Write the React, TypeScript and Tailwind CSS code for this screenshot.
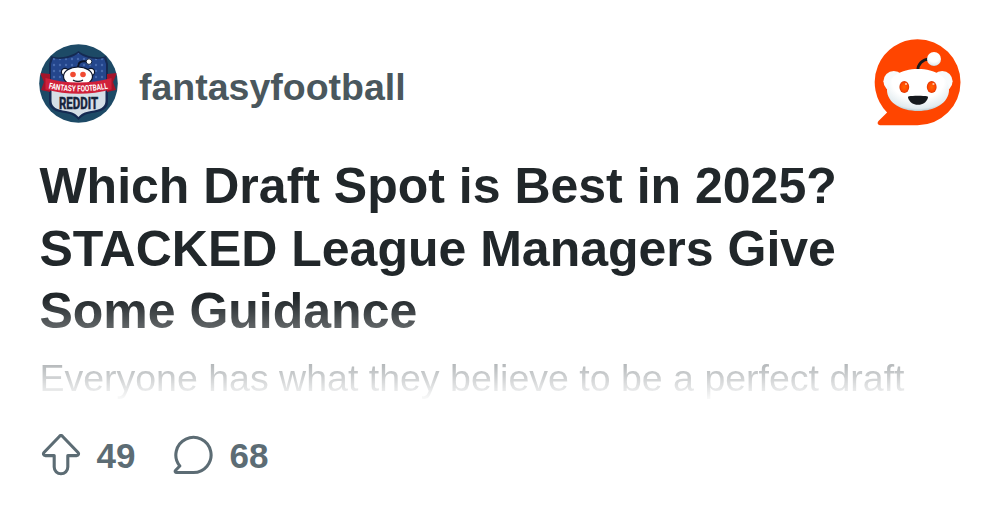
function SubredditAvatar() {
  return (
    <svg className="mt-[2px] h-[79px] w-[79px] shrink-0 overflow-visible" viewBox="0 0 79 79" aria-hidden="true">
      <defs>
        <clipPath id="avatar-clip">
          <circle cx="39.5" cy="39.5" r="39.3" />
        </clipPath>
        <pattern id="dots" width="6" height="6" patternUnits="userSpaceOnUse">
          <circle cx="3" cy="3" r="1.2" fill="#5f84c4" />
        </pattern>
      </defs>
      <g clipPath="url(#avatar-clip)">
        <rect width="79" height="79" fill="#1d4a66" />
        <path
          d="M12 12C18 15 32 13 39.5 7C47 13 61 15 67 12L69 20V58C69 65 62 68 53 69C46 70 42 73 39.5 76C37 73 33 70 26 69C17 68 10 65 10 58V20Z"
          fill="#152a52"
        />
        <path d="M14 14C21 16 32 15 39.5 9C47 15 58 16 65 14L67 20V46H12V20Z" fill="#24468c" />
        <path d="M14 14C21 16 32 15 39.5 9C47 15 58 16 65 14L67 20V46H12V20Z" fill="url(#dots)" opacity=".6" />
        <path d="M12.5 44H66.5V57C66.5 63 61 66 52 67C45.5 68 42 70 39.5 73C37 70 33.5 68 27 67C18 66 12.5 63 12.5 57Z" fill="#d5dee6" />
        <path d="M39 24C39 18 42 16.5 48 17.5" fill="none" stroke="#0c152b" strokeWidth="2" />
        <circle cx="50" cy="17.6" r="2.8" fill="#fff" stroke="#14233c" strokeWidth="1" />
        <circle cx="26" cy="28" r="3.6" fill="#fff" stroke="#0c152b" strokeWidth="1.2" />
        <circle cx="52" cy="28" r="3.6" fill="#fff" stroke="#0c152b" strokeWidth="1.2" />
        <ellipse cx="39" cy="32.5" rx="14.5" ry="9.5" fill="#fff" stroke="#0c152b" strokeWidth="1.2" />
        <circle cx="34" cy="30.5" r="2.8" fill="#f04a32" />
        <circle cx="44" cy="30.5" r="2.8" fill="#f04a32" />
        <path d="M34 36.2Q39 38.8 44 36.2" fill="none" stroke="#1b2434" strokeWidth="1.3" />
        <path d="M1 29L11 30V48L2 46L5 38ZM78 29L68 30V48L77 46L74 38Z" fill="#a3142a" />
        <path d="M6.5 34Q39.5 43 72.5 34V45.5Q39.5 54 6.5 45.5Z" fill="#d0203a" />
      </g>
      <path id="ribbon" d="M9.5 44.5Q39.5 50.5 69.5 44.5" fill="none" />
      <text className="fill-white font-['Roboto',sans-serif] text-[8.4px] font-bold">
        <textPath href="#ribbon" startOffset="0" textLength="60" lengthAdjust="spacingAndGlyphs">
          FANTASY FOOTBALL
        </textPath>
      </text>
      <text
        x="20"
        y="64.8"
        textLength="39"
        lengthAdjust="spacingAndGlyphs"
        className="fill-[#17243c] stroke-[#17243c] stroke-[0.5px] font-['Roboto',sans-serif] text-[16px] font-bold"
      >
        REDDIT
      </text>
    </svg>
  )
}

function RedditLogo() {
  return (
    <svg className="h-[87px] w-[87px] shrink-0" viewBox="0 0 87 87" aria-hidden="true">
      <defs>
        <radialGradient id="face" cx=".5" cy=".3" r=".75">
          <stop offset=".55" stopColor="#fff" />
          <stop offset=".85" stopColor="#e1ebef" />
          <stop offset="1" stopColor="#98b0b8" />
        </radialGradient>
        <radialGradient id="eye" cx=".5" cy=".5" r=".6">
          <stop offset="0" stopColor="#ff6600" />
          <stop offset=".6" stopColor="#ff4500" />
          <stop offset="1" stopColor="#b92b00" />
        </radialGradient>
      </defs>
      <path
        d="M43.5 .2A43 43 0 1 1 43.5 86.2H6.2C3.8 86.2 2.8 83.7 4.5 82L13.1 73.4A43 43 0 0 1 43.5 .2Z"
        fill="#ff4500"
      />
      <circle cx="19.8" cy="42.3" r="10.4" fill="#f8fbfc" />
      <circle cx="68.2" cy="42.3" r="10.4" fill="#f8fbfc" />
      <path d="M43.8 31.5C43.8 25 48.5 20.5 55 20.2" fill="none" stroke="#191a1c" strokeWidth="2.8" />
      <circle cx="60" cy="20" r="7" fill="url(#face)" />
      <path
        d="M44 30C61 30 75 38 75 51C75 63.5 61 72 44 72S13 63.5 13 51C13 38 27 30 44 30Z"
        fill="url(#face)"
      />
      <ellipse cx="30.3" cy="48" rx="4.9" ry="6" fill="url(#eye)" />
      <ellipse cx="57.7" cy="48" rx="4.9" ry="6" fill="url(#eye)" />
      <circle cx="32" cy="45" r="1.1" fill="#ffc7a5" />
      <circle cx="59.4" cy="45" r="1.1" fill="#ffc7a5" />
      <path
        d="M44 56.8C48 56.8 51 57 52.9 57.3C53.8 57.5 54.2 58 53.9 58.9C52.5 62.9 49 65.7 44 65.7S35.5 62.9 34.1 58.9C33.8 58 34.2 57.5 35.1 57.3C37 57 40 56.8 44 56.8Z"
        fill="#15191d"
      />
    </svg>
  )
}

function UpvoteIcon() {
  return (
    <svg className="h-[42px] w-[40px]" viewBox="0 0 40 42" fill="none" stroke="currentColor" strokeWidth="3.1" strokeLinejoin="round">
      <path d="M18.6 2.2Q20 .9 21.4 2.2L36.8 18.2C38.2 19.8 37.5 21.6 35.5 21.6H26.8V33A6.8 6.8 0 0 1 13.2 33V21.6H4.5C2.5 21.6 1.8 19.8 3.2 18.2Z" />
    </svg>
  )
}

function CommentIcon() {
  return (
    <svg className="h-[42px] w-[40px]" viewBox="0 0 40 42" fill="none" stroke="currentColor" strokeWidth="3.1" strokeLinejoin="round">
      <path d="M20 38.5H3.8C2.2 38.5 1.7 37.4 2.7 36.3L6.8 32A17.6 17.6 0 1 1 20 38.5Z" />
    </svg>
  )
}

export default function App() {
  return (
    <main className="flex h-[521px] w-[1000px] flex-col overflow-hidden bg-white pl-[39px] pr-[39px] pt-[39px] font-['Liberation_Sans',Arial,sans-serif]">
      <header className="flex h-[87px] items-center justify-between">
        <div className="flex items-center gap-[21px]">
          <SubredditAvatar />
          <span className="pt-[8px] text-[37.5px] leading-[46px] font-bold text-[#4a575d]">fantasyfootball</span>
        </div>
        <RedditLogo />
      </header>

      <section className="mt-[29px] h-[248px] overflow-hidden pl-[0.4px] mask-[linear-gradient(to_bottom,black_0,black_143px,transparent_247px)]">
        <h1 className="text-[50px] leading-[62.5px] font-bold text-[#21272a]">
          Which Draft Spot is Best in 2025?
          <br />
          STACKED League Managers Give
          <br />
          Some Guidance
        </h1>
        <p className="mt-3 text-[37.5px] leading-[47px] whitespace-nowrap text-[#333d42]">
          Everyone has what they believe to be a perfect draft
        </p>
      </section>

      <footer className="mt-[29.5px] flex items-center text-[35px] leading-[42px] font-bold text-[#5c6c74]">
        <div className="ml-[1.5px] flex items-center gap-4">
          <UpvoteIcon />
          <span className="pt-[2px]">49</span>
        </div>
        <div className="ml-[38px] flex items-center gap-4">
          <CommentIcon />
          <span className="pt-[2px]">68</span>
        </div>
      </footer>
    </main>
  )
}
